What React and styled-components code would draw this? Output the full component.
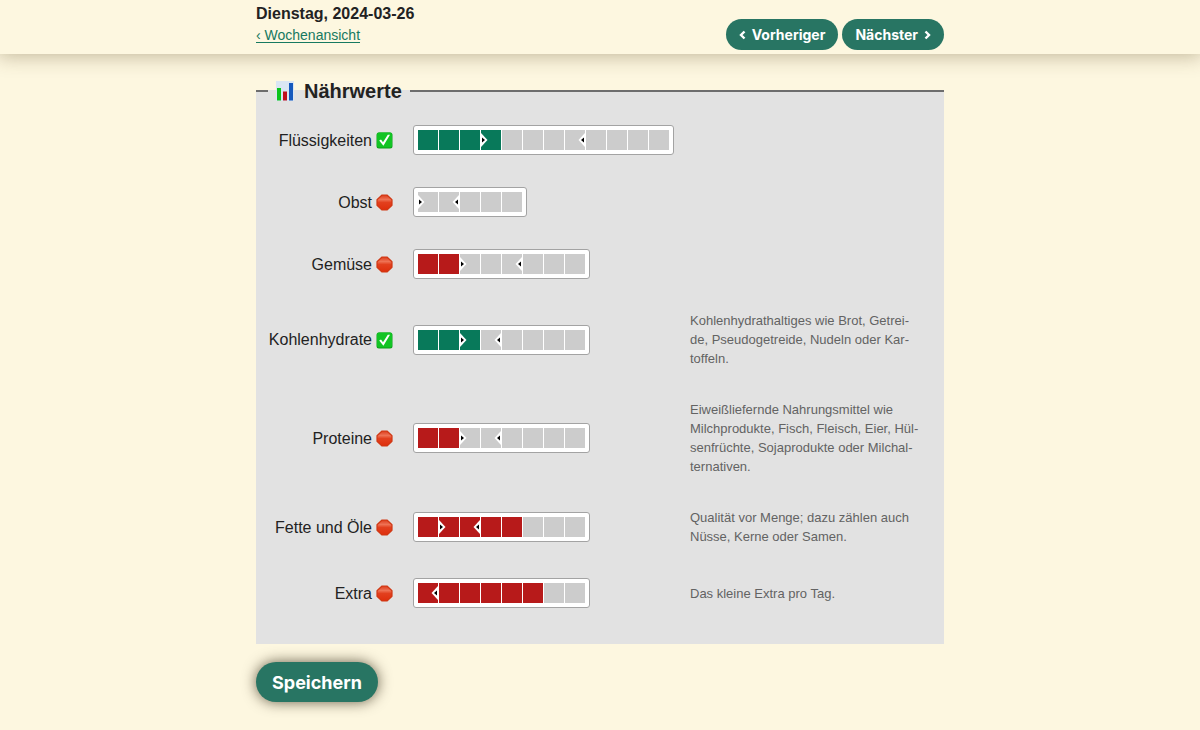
import React, { useState } from 'react';
import styled, { createGlobalStyle } from 'styled-components';

const GlobalStyle = createGlobalStyle`
  * {
    box-sizing: border-box;
  }

  body {
    margin: 0;
    background-color: #fdf7e0;
    color: #222;
    font-family: "Liberation Sans", Arial, sans-serif;
    font-size: 16px;
    line-height: 24px;
  }
`;

const Header = styled.header`
  padding: 2px 16px 4px;
  background-color: #fdf7e0;
  box-shadow: 0 0 20px 2px rgba(80, 60, 20, 0.35);
`;

const Container = styled.div`
  max-width: 688px;
  margin: 0 auto;
`;

const HeaderContent = styled(Container)`
  display: flex;
  justify-content: space-between;
  align-items: flex-end;
`;

const Title = styled.h1`
  margin: 0;
  font-size: 16px;
  line-height: 24px;
`;

const BackLink = styled.a`
  display: block;
  padding-bottom: 6px;
  color: #16795f;
  font-size: 14px;
  line-height: 18px;
  text-underline-offset: 2px;
`;

const DayNav = styled.nav`
  display: flex;
  gap: 4px;
`;

const Button = styled.button`
  display: flex;
  align-items: center;
  gap: 6px;
  border: 0;
  border-radius: 20px;
  background-color: #287563;
  color: #fff;
  font-family: Inter, sans-serif;
  font-weight: bold;
  cursor: pointer;
`;

const NavButton = styled(Button)`
  height: 31px;
  padding: 0 13px;
  font-size: 14px;
`;

const SaveButton = styled(Button)`
  height: 40px;
  padding: 0 16px;
  font-size: 18px;
  box-shadow: 0 0 14px rgba(40, 30, 10, 0.7);
`;

const Main = styled.main`
  padding: 24px 16px 28px;
`;

const Form = styled.form`
  display: flex;
  flex-direction: column;
  align-items: flex-start;
  gap: 18px;
`;

const Fieldset = styled.fieldset`
  width: 100%;
  min-width: 0;
  margin: 0;
  padding: 5px 12px 20px;
  border: 0;
  border-top: 2px solid #6d6d6d;
  background-color: #e2e2e2;
`;

const Legend = styled.legend`
  display: flex;
  align-items: center;
  gap: 9px;
  padding: 0 8px 0 7px;
  font-size: 20px;
  font-weight: bold;
  line-height: 26px;
`;

const Row = styled.div`
  display: grid;
  grid-template-columns: 129px 261px 1fr;
  gap: 16px;
  align-items: center;
  padding: 16px 0;
`;

const Label = styled.label`
  display: flex;
  justify-content: flex-end;
  align-items: center;
  gap: 4px;
  padding: 1px 4px 0 0;
  white-space: nowrap;
`;

const Note = styled.p`
  max-width: 230px;
  margin: 0;
  color: #636363;
  font-size: 13px;
  line-height: 19px;
`;

const Meter = styled.div`
  position: relative;
  justify-self: start;
  display: flex;
  padding: 4px 3px 4px 4px;
  border: 1px solid #a3a3a3;
  border-radius: 3px;
  background-color: #fff;
`;

const Range = styled.input`
  appearance: none;
  width: ${({ max }) => max * 21}px;
  height: 20px;
  margin: 0;
  cursor: pointer;
  background:
    repeating-linear-gradient(to right, transparent 0 20px, #fff 20px 21px),
    linear-gradient(${({ $ok }) => ($ok ? '#08795a, #08795a' : '#b71a1a, #b71a1a')})
      0 0 / ${({ value }) => value * 21}px 100% no-repeat,
    #ccc;

  &::-webkit-slider-thumb {
    appearance: none;
    width: 1px;
    height: 20px;
  }
`;

const Marker = styled.svg`
  position: absolute;
  top: 7px;
  left: ${({ $left }) => $left}px;
  pointer-events: none;
`;

const MinMarker = ({ at }) => (
  <Marker $left={4 + (at - 1) * 21} width="7" height="14" viewBox="0 0 7 14">
    <path d="M0 0 6.500 7 0 14Z" fill="#fff" />
    <path d="M1 4.500 4 7 1 9.500Z" fill="#000" />
  </Marker>
);

const MaxMarker = ({ at }) => (
  <Marker $left={4 + at * 21 - 8} width="7" height="14" viewBox="0 0 7 14">
    <path d="M7 0 .5 7 7 14Z" fill="#fff" />
    <path d="M6 4.500 3 7 6 9.500Z" fill="#000" />
  </Marker>
);

const ChartIcon = () => (
  <svg width="20" height="20" viewBox="0 0 20 20" aria-hidden="true">
    <path d="M1 0h18v20H1Z" fill="#dae6f3" />
    <path d="M2 7h4v12.500H2Z" fill="#0cc41c" />
    <path d="M8 10.500h4v9H8Z" fill="#c0101c" />
    <path d="M14 2h4v17.500h-4Z" fill="#1659bd" />
  </svg>
);

const CheckIcon = () => (
  <svg width="17" height="17" viewBox="0 0 17 17" role="img" aria-label="erreicht">
    <rect x=".5" y=".5" width="16" height="16" rx="2.500" fill="#0c9f19" />
    <rect x="1" y=".5" width="15" height="15" rx="2" fill="#12c424" />
    <path d="M3.200 8.400 5 7.400 7 10.200 11.800 2.800h2.200L7.400 13.700Z" fill="#fff" />
  </svg>
);

const StopIcon = () => (
  <svg width="17" height="17" viewBox="0 0 17 17" role="img" aria-label="nicht erreicht">
    <defs>
      <linearGradient id="stop" x1="0" y1="0" x2="0" y2="1">
        <stop offset="0" stopColor="#dc3c1c" />
        <stop offset=".3" stopColor="#ee7254" />
        <stop offset=".5" stopColor="#e2401e" />
        <stop offset="1" stopColor="#de2e0c" />
      </linearGradient>
    </defs>
    <path
      d="M6 1h5l5 4.700v5.600L11 16H6l-5-4.700V5.700Z"
      fill="url(#stop)"
      stroke="#d03814"
      strokeWidth="1.200"
      strokeLinejoin="round"
    />
  </svg>
);

const Chevron = ({ d }) => (
  <svg width="7" height="10" viewBox="0 0 7 10" aria-hidden="true">
    <path d={d} fill="none" stroke="#fff" strokeWidth="2.400" />
  </svg>
);

const nutrients = [
  { id: 'fluids', name: 'Flüssigkeiten', size: 12, min: 4, max: 8, value: 4 },
  { id: 'fruit', name: 'Obst', size: 5, min: 1, max: 2, value: 0 },
  { id: 'vegetables', name: 'Gemüse', size: 8, min: 3, max: 5, value: 2 },
  {
    id: 'carbs',
    name: 'Kohlenhydrate',
    size: 8,
    min: 3,
    max: 4,
    value: 3,
    note: 'Kohlenhydrathaltiges wie Brot, Getrei\u00ADde, Pseudogetreide, Nudeln oder Kar\u00ADtoffeln.',
  },
  {
    id: 'proteins',
    name: 'Proteine',
    size: 8,
    min: 3,
    max: 4,
    value: 2,
    note: 'Eiweißliefernde Nahrungsmittel wie Milchprodukte, Fisch, Fleisch, Eier, Hül\u00ADsenfrüchte, Sojaprodukte oder Milchal\u00ADternativen.',
  },
  {
    id: 'fats',
    name: 'Fette und Öle',
    size: 8,
    min: 2,
    max: 3,
    value: 5,
    note: 'Qualität vor Menge; dazu zählen auch Nüsse, Kerne oder Samen.',
  },
  { id: 'extra', name: 'Extra', size: 8, min: 0, max: 1, value: 6, note: 'Das kleine Extra pro Tag.' },
];

const Nutrient = ({ id, name, size, min, max, value: initial, note }) => {
  const [value, setValue] = useState(initial);
  const ok = value >= min && value <= max;

  return (
    <Row>
      <Label htmlFor={id}>
        {name}
        {ok ? <CheckIcon /> : <StopIcon />}
      </Label>
      <Meter>
        <Range
          type="range"
          id={id}
          name={id}
          min={0}
          max={size}
          value={value}
          $ok={ok}
          onChange={(e) => setValue(Number(e.target.value))}
        />
        {min > 0 && <MinMarker at={min} />}
        <MaxMarker at={max} />
      </Meter>
      {note && <Note>{note}</Note>}
    </Row>
  );
};

const App = () => {
  return (
    <>
      <GlobalStyle />
      <Header>
        <HeaderContent>
          <div>
            <Title>Dienstag, 2024-03-26</Title>
            <BackLink href="#woche">‹ Wochenansicht</BackLink>
          </div>
          <DayNav>
            <NavButton type="button">
              <Chevron d="M5.500 1.500 2 5l3.500 3.500" />
              Vorheriger
            </NavButton>
            <NavButton type="button">
              Nächster
              <Chevron d="M1.500 1.500 5 5 1.500 8.500" />
            </NavButton>
          </DayNav>
        </HeaderContent>
      </Header>
      <Main>
        <Container>
          <Form onSubmit={(e) => e.preventDefault()}>
            <Fieldset>
              <Legend>
                <ChartIcon />
                Nährwerte
              </Legend>
              {nutrients.map((nutrient) => (
                <Nutrient key={nutrient.id} {...nutrient} />
              ))}
            </Fieldset>
            <SaveButton type="submit">Speichern</SaveButton>
          </Form>
        </Container>
      </Main>
    </>
  );
};

export default App;
